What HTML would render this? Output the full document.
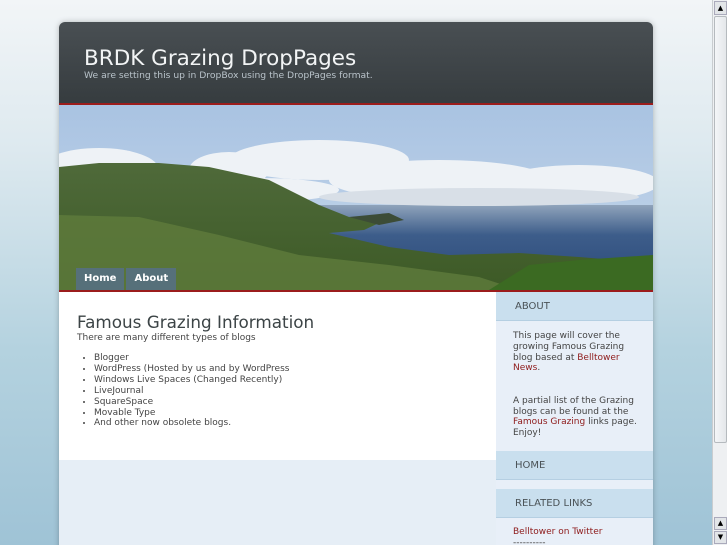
<!DOCTYPE html>
<html><head><meta charset="utf-8"><style>
*{margin:0;padding:0;box-sizing:border-box}
html,body{width:727px;height:545px;overflow:hidden}
body{font-family:"DejaVu Sans","Liberation Sans",sans-serif;background:linear-gradient(#f2f5f7 0px,#dde9ef 150px,#b4d2df 350px,#9fc3d6 545px);position:relative}
#wrap{position:absolute;left:59px;top:22px;width:594px;height:530px;box-shadow:0 0 6px rgba(0,0,0,.25);border-radius:6px 6px 0 0;overflow:hidden;background:#e6eef6}
#head{height:83px;background:linear-gradient(#494f53,#363c3f);border-bottom:2px solid #9b1c1c;position:relative}
#head h1{position:absolute;left:25px;top:24px;font-weight:normal;color:#f2f4f5;font-size:21.5px}
#head p{position:absolute;left:25px;top:48px;color:#b9c3ca;font-size:9.2px}
#ban{height:187px;position:relative;border-bottom:2px solid #9b1c1c}
#nav{position:absolute;left:17px;bottom:0;display:flex;gap:2px}
#nav span{background:#56707a;color:#fff;font-weight:bold;font-size:10px;height:22px;line-height:21px;padding:0 8px}
#main{position:absolute;left:0;top:270px;width:437px;height:168px;background:#fff;padding:20px 0 0 18px;color:#444}
#main h2{font-weight:normal;font-size:16.8px;color:#3c4446;line-height:20px}
#main p{font-size:9px;margin-top:1px}
#main ul{font-size:9px;margin:10px 0 0 17px;line-height:10.9px}
#side{position:absolute;left:437px;top:270px;width:157px;height:270px;background:#e8eff8;color:#444;font-size:9px}
.sh{background:#c9dfee;height:29px;line-height:29px;padding-left:19px;color:#4a5256;font-size:10px;border-bottom:1px solid #b5cfe2}
.sb{padding:10px 10px 0 17px;line-height:10.8px}
a{color:#8e1b1b;text-decoration:none}
#sc{position:absolute;left:712px;top:0;width:15px;height:545px;background:#eef0f2;border-left:1px solid #c9cdd0}
</style></head><body>
<div id="wrap">
<div id="head"><h1>BRDK Grazing DropPages</h1><p>We are setting this up in DropBox using the DropPages format.</p></div>
<div id="ban">
<svg width="594" height="185" viewBox="0 0 594 185" style="display:block">
<defs><linearGradient id="s" x1="0" y1="0" x2="0" y2="1"><stop offset="0" stop-color="#a9c3e2"/><stop offset="1" stop-color="#c6d7ea"/></linearGradient>
<linearGradient id="sea" x1="0" y1="0" x2="0" y2="1"><stop offset="0" stop-color="#8fa3bb"/><stop offset=".4" stop-color="#3d5d8a"/><stop offset="1" stop-color="#2d4c7c"/></linearGradient>
<linearGradient id="g" x1="0" y1="0" x2="0" y2="1"><stop offset="0" stop-color="#4f6a3a"/><stop offset="1" stop-color="#3d5a26"/></linearGradient></defs>
<rect width="594" height="185" fill="url(#s)"/>
<rect x="250" y="100" width="344" height="75" fill="url(#sea)"/>
<g fill="#eef2f6">
<ellipse cx="40" cy="65" rx="60" ry="22"/><ellipse cx="170" cy="65" rx="40" ry="18"/><ellipse cx="260" cy="55" rx="90" ry="20"/>
<ellipse cx="380" cy="75" rx="110" ry="20"/><ellipse cx="520" cy="78" rx="80" ry="18"/><ellipse cx="200" cy="85" rx="80" ry="12"/>
</g>
<g fill="#d8dfe7"><ellipse cx="420" cy="92" rx="160" ry="9"/><ellipse cx="120" cy="88" rx="90" ry="8"/></g>
<path d="M0 62 L40 58 L100 58 L150 62 L210 75 L260 100 L290 112 L320 118 L305 125 L270 128 L330 142 L390 150 L460 148 L520 152 L594 158 L594 185 L0 185 Z" fill="url(#g)"/>
<path d="M0 110 L80 112 L160 130 L240 150 L330 160 L420 172 L460 185 L0 185 Z" fill="#5f7c3c" opacity=".8"/>
<path d="M430 185 L470 160 L520 155 L594 150 L594 185 Z" fill="#3b6a22"/>
<path d="M290 112 L330 108 L345 115 L320 120 Z" fill="#3c4c36"/>
</svg>
<div id="nav"><span>Home</span><span>About</span></div>
</div>
<div id="main"><h2>Famous Grazing Information</h2><p>There are many different types of blogs</p>
<ul><li>Blogger</li><li>WordPress (Hosted by us and by WordPress</li><li>Windows Live Spaces (Changed Recently)</li><li>LiveJournal</li><li>SquareSpace</li><li>Movable Type</li><li>And other now obsolete blogs.</li></ul></div>
<div id="side">
<div class="sh">ABOUT</div>
<div class="sb" style="height:130px">This page will cover the growing Famous Grazing blog based at <a>Belltower News</a>.<br><br><br>A partial list of the Grazing blogs can be found at the <a>Famous Grazing</a> links page. Enjoy!</div>
<div class="sh">HOME</div>
<div style="height:9px"></div>
<div class="sh">RELATED LINKS</div>
<div class="sb" style="padding-top:9px"><a>Belltower on Twitter</a><br>----------</div>
</div>
</div>
<div id="sc">
<div style="position:absolute;left:1px;top:1px;width:13px;height:14px;background:#e2e5e8;border:1px solid #aab;font-size:7px;text-align:center;line-height:12px">▲</div>
<div style="position:absolute;left:1px;top:16px;width:13px;height:427px;background:linear-gradient(90deg,#f4f6f8,#e4e7ea);border:1px solid #b5babe;border-radius:2px"></div>
<div style="position:absolute;left:1px;top:517px;width:13px;height:13px;background:#e2e5e8;border:1px solid #aab;font-size:7px;text-align:center;line-height:11px">▲</div>
<div style="position:absolute;left:1px;top:531px;width:13px;height:13px;background:#e2e5e8;border:1px solid #aab;font-size:7px;text-align:center;line-height:11px">▼</div>
</div>
</body></html>
